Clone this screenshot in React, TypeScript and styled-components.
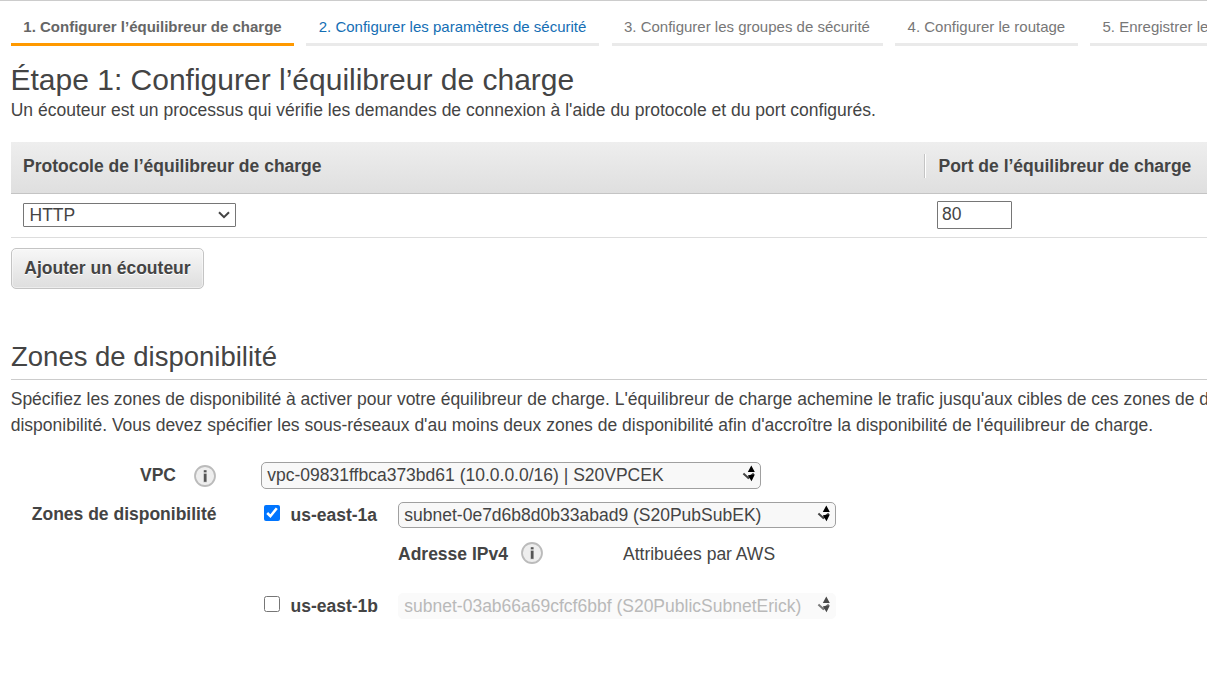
import React from "react";
import styled, { createGlobalStyle } from "styled-components";

const Global = createGlobalStyle`
  * { box-sizing: border-box; }
  body {
    margin: 0;
    background: #fff;
    color: #444;
    font-family: "Liberation Sans", Arial, sans-serif;
    font-size: 17.5px;
    overflow: hidden;
  }
`;

const Page = styled.div`
  height: 688px;
  padding-left: 11px;
  border-top: 1px solid #ccc;
  overflow: hidden;
  white-space: nowrap;
`;

const Steps = styled.nav`
  display: flex;
  gap: 12.45px;
  height: 45px;
`;

const Step = styled.div<{ $w: number; $state?: "active" | "link" }>`
  flex: 0 0 ${(p) => p.$w}px;
  padding: 0 0 0 12.3px;
  line-height: 51px;
  font-size: 15px;
  font-weight: ${(p) => (p.$state === "active" ? 700 : 400)};
  color: ${(p) => (p.$state === "active" ? "#666" : p.$state === "link" ? "#146eb4" : "#777")};
  border-bottom: 3px solid ${(p) => (p.$state === "active" ? "#f90" : "#eaeaea")};
  height: 45px;
`;

const Title = styled.h1`
  margin: 16px 0 0 -0.5px;
  font-size: 30px;
  line-height: 36px;
  font-weight: 400;
`;

const Intro = styled.p`
  margin: -1px 0 0 -0.3px;
  line-height: 26px;
`;

const TableHead = styled.div`
  display: flex;
  margin-top: 19px;
  height: 52px;
  padding: 12px 0 0 12px;
  background: linear-gradient(#eee, #dfdfdf);
  border-bottom: 1px solid #c4c4c4;
  font-weight: 700;
  line-height: 24px;
`;

const ProtocolCol = styled.div`
  flex: 0 0 901px;
`;

const PortHead = styled.div`
  height: 24px;
  padding-left: 13.5px;
  border-left: 1px solid #c4c4c4;
  box-shadow: inset 1px 0 #fff;
`;

const TableRow = styled.div`
  display: flex;
  height: 44px;
  padding: 7px 0 0 12px;
  border-bottom: 1px solid #ddd;
`;

const ProtocolSelect = styled.div`
  display: flex;
  align-items: center;
  justify-content: space-between;
  width: 213px;
  height: 24px;
  margin-top: 2px;
  padding: 0 5px 0 5.5px;
  border: 1px solid #767676;
  border-radius: 1px;
  line-height: 22px;
`;

const PortInput = styled.input`
  width: 75px;
  height: 28px;
  margin-left: 13px;
  padding: 0 4px 2px;
  border: 1px solid #767676;
  border-radius: 1px;
  color: #444;
  font: 17.5px "Liberation Sans", Arial, sans-serif;
`;

const AddButton = styled.button`
  display: block;
  margin-top: 10px;
  width: 193px;
  height: 41px;
  padding: 0;
  border: 1px solid #c4c4c4;
  border-radius: 5px;
  background: linear-gradient(#f7f7f7, #dedede);
  box-shadow: inset 0 0 0 1px rgba(255, 255, 255, 0.45);
  color: #444;
  font: 700 17.5px "Liberation Sans", Arial, sans-serif;
  text-shadow: 0 1px #fff;
`;

const SectionTitle = styled.h2`
  margin: 50px 0 0;
  height: 41px;
  border-bottom: 1px solid #ccc;
  font-size: 27.5px;
  line-height: 36px;
  font-weight: 400;
`;

const SectionText = styled.p`
  margin: 6px 0 0 -0.3px;
  line-height: 26px;
`;

const Form = styled.div`
  display: grid;
  grid-template-columns: 205.5px 1fr;
  column-gap: 44.5px;
  margin-top: 24px;
`;

const Label = styled.div`
  display: flex;
  justify-content: flex-end;
  height: 26px;
  line-height: 26px;
  font-weight: 700;
`;

const ZoneLabel = styled.span`
  padding-top: 12px;
`;

const InfoSvg = styled.svg`
  flex: none;
  width: 22px;
  height: 22px;
`;

const LabelInfo = styled.span`
  display: flex;
  margin: 3px 0.5px 0 18px;
`;

const Zones = styled.div`
  display: flex;
  flex-direction: column;
`;

const ZoneRow = styled.div<{ $top: number }>`
  display: flex;
  height: 26px;
  margin-top: ${(p) => p.$top}px;
  padding-left: 3px;
`;

const Check = styled.input`
  width: 16px;
  height: 16px;
  margin: 3px 10.5px 0 0;
`;

const ZoneName = styled.label`
  width: 107.5px;
  font-weight: 700;
  line-height: 26px;
`;

const SelectBox = styled.div<{ $w: number; $h: number; $disabled?: boolean }>`
  display: flex;
  justify-content: space-between;
  width: ${(p) => p.$w}px;
  height: ${(p) => p.$h}px;
  padding: 0 4px 0 5.3px;
  line-height: 24px;
  border: 1px solid #a0a0a0;
  border-radius: 5px;
  background: #f8f8f8;
  ${(p) => p.$disabled && "border-color: #fafafa; background: #fafafa; color: #b9b9b9;"}
`;

const Arrows = styled.svg<{ $dim?: boolean }>`
  flex: none;
  width: 14px;
  height: 18px;
  margin-top: 2px;
  opacity: ${(p) => (p.$dim ? 0.7 : 1)};
`;

const AddressRow = styled.div`
  display: flex;
  margin-top: 13px;
  padding-left: 137px;
  height: 26px;
  line-height: 26px;
`;

const AddressLabel = styled.div`
  display: flex;
  gap: 13px;
  width: 225px;
  font-weight: 700;
`;

const Info = () => (
  <InfoSvg viewBox="0 0 22 22">
    <circle cx="11" cy="11" r="10" fill="#eee" stroke="#bbb" strokeWidth="1.8" />
    <path d="M9.3 5.2h3.6v2.2H9.3zM9.3 8.6h3.6v8.6H9.3z" fill="#999" opacity=".6" />
    <path d="M10 5.2h2.4v2H10zM10 8.8h2.4v8H10z" fill="#555" />
  </InfoSvg>
);

const SelectArrows = ({ dim }: { dim?: boolean }) => (
  <Arrows $dim={dim} viewBox="0 0 14 18">
    <path d="M1.4 8.4L6.3 12.9L11.8 8.6" fill="none" stroke="#444" strokeWidth="2" />
    <path d="M5.8 7L9.3 0.4L12.8 7zM5.9 10.2L12.8 9.6L9.5 16.2z" fill="#000" />
  </Arrows>
);

export default function App() {
  return (
    <Page>
      <Global />
      <Steps>
        <Step $w={283} $state="active">1. Configurer l’équilibreur de charge</Step>
        <Step $w={292.8} $state="link">2. Configurer les paramètres de sécurité</Step>
        <Step $w={271.2}>3. Configurer les groupes de sécurité</Step>
        <Step $w={182.5}>4. Configurer le routage</Step>
        <Step $w={220}>5. Enregistrer les cibles</Step>
      </Steps>
      <Title>Étape 1: Configurer l’équilibreur de charge</Title>
      <Intro>
        Un écouteur est un processus qui vérifie les demandes de connexion à l'aide du protocole et du port configurés.
      </Intro>
      <TableHead>
        <ProtocolCol>Protocole de l’équilibreur de charge</ProtocolCol>
        <PortHead>Port de l’équilibreur de charge</PortHead>
      </TableHead>
      <TableRow>
        <ProtocolCol>
          <ProtocolSelect>
            HTTP
            <svg width="12" height="8" viewBox="0 0 12 8">
              <path d="M1 1.2L6 6.2L11 1.2" fill="none" stroke="#444" strokeWidth="2" />
            </svg>
          </ProtocolSelect>
        </ProtocolCol>
        <PortInput defaultValue="80" />
      </TableRow>
      <AddButton>Ajouter un écouteur</AddButton>
      <SectionTitle>Zones de disponibilité</SectionTitle>
      <SectionText>
        Spécifiez les zones de disponibilité à activer pour votre équilibreur de charge. L'équilibreur de charge
        achemine le trafic jusqu'aux cibles de ces zones de d
        <br />
        disponibilité. Vous devez spécifier les sous-réseaux d'au moins deux zones de disponibilité afin d'accroître la
        disponibilité de l'équilibreur de charge.
      </SectionText>
      <Form>
        <Label>
          VPC
          <LabelInfo>
            <Info />
          </LabelInfo>
        </Label>
        <SelectBox $w={500} $h={27}>
          vpc-09831ffbca373bd61 (10.0.0.0/16) | S20VPCEK
          <SelectArrows />
        </SelectBox>
        <Label>
          <ZoneLabel>Zones de disponibilité</ZoneLabel>
        </Label>
        <Zones>
          <ZoneRow $top={13}>
            <Check type="checkbox" defaultChecked />
            <ZoneName>us-east-1a</ZoneName>
            <SelectBox $w={438} $h={26}>
              subnet-0e7d6b8d0b33abad9 (S20PubSubEK)
              <SelectArrows />
            </SelectBox>
          </ZoneRow>
          <AddressRow>
            <AddressLabel>
              Adresse IPv4
              <LabelIcon>
                <Info />
              </LabelIcon>
            </AddressLabel>
            Attribuées par AWS
          </AddressRow>
          <ZoneRow $top={26}>
            <Check type="checkbox" />
            <ZoneName>us-east-1b</ZoneName>
            <SelectBox $w={438} $h={26} $disabled>
              subnet-03ab66a69cfcf6bbf (S20PublicSubnetErick)
              <SelectArrows dim />
            </SelectBox>
          </ZoneRow>
        </Zones>
      </Form>
    </Page>
  );
}

const LabelIcon = styled.span`
  display: flex;
  padding-top: 1px;
  height: 23px;
`;
